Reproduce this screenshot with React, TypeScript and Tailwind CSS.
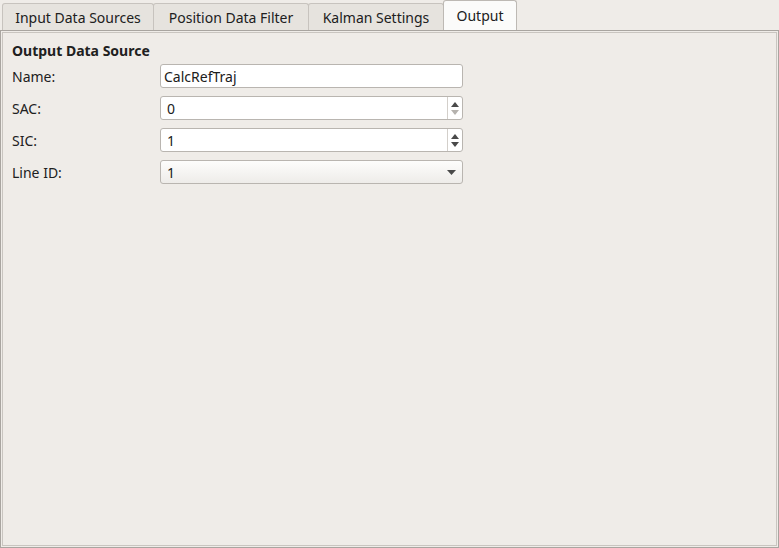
import React from "react";

const font = { fontFamily: '"Noto Sans", "Open Sans", sans-serif' };

function Tab({ label, active, w }: { label: string; active?: boolean; w: string }) {
  if (active) {
    return (
      <div
        className={`${w} h-[30px] -mb-[1px] relative z-10 flex items-center justify-center bg-[#fbfbfa] border border-[#bdb9b4] border-b-0 rounded-t-[3px] text-[14px] text-[#202020]`}
      >
        {label}
      </div>
    );
  }
  return (
    <div
      className={`${w} h-[27px] mt-[3px] flex items-center justify-center bg-[#e6e3de] border border-[#c7c3be] border-b-0 rounded-t-[3px] text-[14px] text-[#202020]`}
    >
      {label}
    </div>
  );
}

function Row({ label, children }: { label: string; children: React.ReactNode }) {
  return (
    <div className="flex items-center h-[24px]">
      <div className="w-[148px] text-[14px] text-[#202020]">{label}</div>
      {children}
    </div>
  );
}

function Spin({ value, upDisabled, downDisabled }: { value: string; upDisabled?: boolean; downDisabled?: boolean }) {
  return (
    <div className="w-[303px] h-[24px] flex bg-white border border-[#b9b5b0] rounded-[3px] overflow-hidden">
      <div className="flex-1 flex items-center pl-[6px] text-[14px] text-[#202020]">{value}</div>
      <div className="w-[15px] border-l border-[#d3cfca] flex flex-col items-center justify-center gap-[3px]">
        <svg width="8" height="5" viewBox="0 0 8 5">
          <path d="M0 5 L4 0 L8 5 Z" fill={upDisabled ? "#b5b2ae" : "#4a4a4a"} />
        </svg>
        <svg width="8" height="5" viewBox="0 0 8 5">
          <path d="M0 0 L4 5 L8 0 Z" fill={downDisabled ? "#b5b2ae" : "#4a4a4a"} />
        </svg>
      </div>
    </div>
  );
}

export default function App() {
  return (
    <div className="w-[779px] h-[548px] bg-[#efece8] overflow-hidden" style={font}>
      <div className="flex pl-[2px] h-[30px]">
        <Tab label="Input Data Sources" w="w-[152px]" />
        <Tab label="Position Data Filter" w="w-[156px] -ml-[1px]" />
        <Tab label="Kalman Settings" w="w-[136px] -ml-[1px]" />
        <Tab label="Output" w="w-[74px] -ml-[1px]" active />
      </div>
      <div className="h-[518px] border border-[#a9a5a0] p-[1px]">
        <div className="h-full border border-[#c9c5c0] bg-[#efece8] pl-[9px] pt-[7px]">
          <div className="font-bold text-[14px] text-[#202020] h-[20px] flex items-center">Output Data Source</div>
          <div className="flex flex-col gap-[8px] mt-[4px]">
            <Row label="Name:">
              <div className="w-[303px] h-[24px] flex items-center bg-white border border-[#b9b5b0] rounded-[3px] pl-[3px] text-[14px] text-[#202020]">
                CalcRefTraj
              </div>
            </Row>
            <Row label="SAC:">
              <Spin value="0" downDisabled />
            </Row>
            <Row label="SIC:">
              <Spin value="1" />
            </Row>
            <Row label="Line ID:">
              <div className="w-[303px] h-[24px] flex items-center justify-between bg-gradient-to-b from-[#fdfdfc] to-[#eeece9] border border-[#b9b5b0] rounded-[3px] pl-[6px] pr-[6px] text-[14px] text-[#202020]">
                <span>1</span>
                <svg width="9" height="5" viewBox="0 0 9 5">
                  <path d="M0 0 L4.5 5 L9 0 Z" fill="#4a4a4a" />
                </svg>
              </div>
            </Row>
          </div>
        </div>
      </div>
    </div>
  );
}
